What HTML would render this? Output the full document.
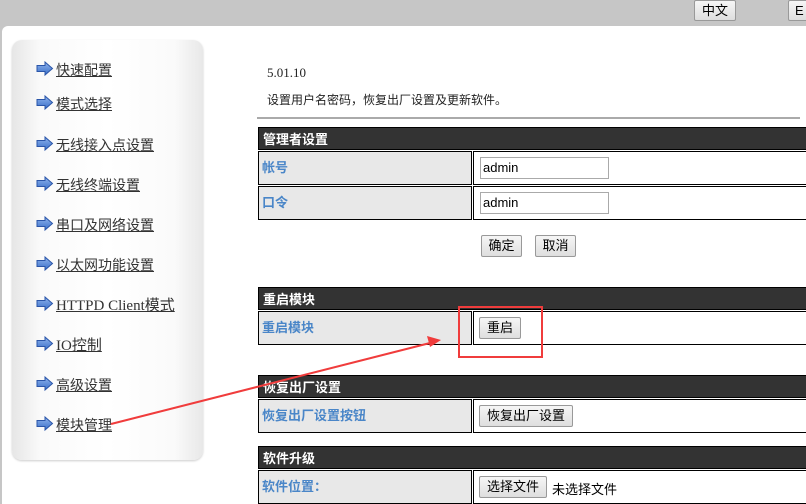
<!DOCTYPE html>
<html style="width:806px;height:504px;overflow:hidden"><head><meta charset="utf-8"><style>
*{margin:0;padding:0;box-sizing:border-box}
body{width:806px;height:504px;overflow:hidden;background:#c6c6c6;font-family:"Liberation Sans","Noto Sans CJK SC",sans-serif;position:relative}
.abs{position:absolute}
.panel{left:2px;top:26px;width:804px;height:478px;background:#fff;border-top-left-radius:6px}
.side{left:12px;top:40px;width:191px;height:420px;border-radius:10px;background:linear-gradient(90deg,#e6e6e6 0%,#fafafa 15%,#fff 50%,#fafafa 85%,#e8e8e8 100%);box-shadow:0 1px 2px #ccc}
.nav{position:absolute;left:36px;font-size:14px;color:#333;text-decoration:underline;line-height:16px;white-space:nowrap}
.nav svg{position:absolute;left:0;top:-1px}
.nav span{margin-left:20px}
.hdr{left:258px;width:560px;height:23px;background:#333;color:#fff;font-weight:bold;font-size:13px;line-height:23px;padding-left:4px;border:1px solid #000}
.lab{left:258px;width:214px;height:34px;background:#e8e8e8;border:1px solid #000;color:#4a86c8;font-weight:bold;font-size:13px;line-height:32px;padding-left:3px}
.val{left:473px;width:340px;height:34px;border:1px solid #000;background:#fff}
.inp{position:absolute;left:6px;top:5px;width:129px;height:22px;border:1px solid #aaa;font-size:13px;line-height:20px;padding-left:2px;color:#000}
.btn{position:absolute;height:22px;border:1px solid #999;border-radius:2px;background:linear-gradient(#f6f6f6,#dedede);font-size:13px;line-height:20px;text-align:center;color:#000}
</style></head><body>
<div class="abs panel"></div>
<div class="btn" style="left:694px;top:0;width:42px;height:21px;line-height:19px">中文</div>
<div class="btn" style="left:788px;top:0;width:30px;height:21px;line-height:19px;text-align:left;padding-left:6px">E</div>
<div class="abs side"></div>
<svg width="0" height="0" style="position:absolute"><defs><linearGradient id="g" x1="0" y1="0" x2="0" y2="1"><stop offset="0" stop-color="#8fb4ee"/><stop offset="1" stop-color="#3a6fc8"/></linearGradient></defs></svg>
<div class="nav" style="top:62px"><svg width="18" height="16"><path d="M1 4.5h8V1l7.5 6.5L9 14v-3.5H1z" fill="url(#g)" stroke="#2a55a8"/></svg><span>快速配置</span></div>
<div class="nav" style="top:96px"><svg width="18" height="16"><path d="M1 4.5h8V1l7.5 6.5L9 14v-3.5H1z" fill="url(#g)" stroke="#2a55a8"/></svg><span>模式选择</span></div>
<div class="nav" style="top:137px"><svg width="18" height="16"><path d="M1 4.5h8V1l7.5 6.5L9 14v-3.5H1z" fill="url(#g)" stroke="#2a55a8"/></svg><span>无线接入点设置</span></div>
<div class="nav" style="top:177px"><svg width="18" height="16"><path d="M1 4.5h8V1l7.5 6.5L9 14v-3.5H1z" fill="url(#g)" stroke="#2a55a8"/></svg><span>无线终端设置</span></div>
<div class="nav" style="top:217px"><svg width="18" height="16"><path d="M1 4.5h8V1l7.5 6.5L9 14v-3.5H1z" fill="url(#g)" stroke="#2a55a8"/></svg><span>串口及网络设置</span></div>
<div class="nav" style="top:257px"><svg width="18" height="16"><path d="M1 4.5h8V1l7.5 6.5L9 14v-3.5H1z" fill="url(#g)" stroke="#2a55a8"/></svg><span>以太网功能设置</span></div>
<div class="nav" style="top:297px"><svg width="18" height="16"><path d="M1 4.5h8V1l7.5 6.5L9 14v-3.5H1z" fill="url(#g)" stroke="#2a55a8"/></svg><span style="font-family:'Liberation Serif','Noto Sans CJK SC',serif;font-size:15px">HTTPD Client模式</span></div>
<div class="nav" style="top:337px"><svg width="18" height="16"><path d="M1 4.5h8V1l7.5 6.5L9 14v-3.5H1z" fill="url(#g)" stroke="#2a55a8"/></svg><span style="font-family:'Liberation Serif','Noto Sans CJK SC',serif;font-size:15px">IO控制</span></div>
<div class="nav" style="top:377px"><svg width="18" height="16"><path d="M1 4.5h8V1l7.5 6.5L9 14v-3.5H1z" fill="url(#g)" stroke="#2a55a8"/></svg><span>高级设置</span></div>
<div class="nav" style="top:417px"><svg width="18" height="16"><path d="M1 4.5h8V1l7.5 6.5L9 14v-3.5H1z" fill="url(#g)" stroke="#2a55a8"/></svg><span>模块管理</span></div>

<div class="abs" style="left:267px;top:65px;font-size:13px;font-family:'Liberation Serif',serif;color:#222">5.01.10</div>
<div class="abs" style="left:267px;top:91px;font-size:12px;color:#222">设置用户名密码，恢复出厂设置及更新软件。</div>
<div class="abs" style="left:257px;top:117px;width:543px;height:2px;background:#aaa"></div>

<div class="abs hdr" style="top:127px">管理者设置</div>
<div class="abs lab" style="top:151px">帐号</div>
<div class="abs val" style="top:151px"><div class="inp">admin</div></div>
<div class="abs lab" style="top:186px">口令</div>
<div class="abs val" style="top:186px"><div class="inp">admin</div></div>
<div class="btn" style="left:481px;top:235px;width:41px">确定</div>
<div class="btn" style="left:535px;top:235px;width:41px">取消</div>

<div class="abs hdr" style="top:287px">重启模块</div>
<div class="abs lab" style="top:311px">重启模块</div>
<div class="abs val" style="top:311px"><div class="btn" style="left:5px;top:5px;width:42px">重启</div></div>

<div class="abs hdr" style="top:375px">恢复出厂设置</div>
<div class="abs lab" style="top:399px">恢复出厂设置按钮</div>
<div class="abs val" style="top:399px"><div class="btn" style="left:5px;top:5px;width:94px">恢复出厂设置</div></div>

<div class="abs hdr" style="top:446px">软件升级</div>
<div class="abs lab" style="top:470px">软件位置：</div>
<div class="abs val" style="top:470px"><div class="btn" style="left:5px;top:5px;width:68px">选择文件</div><span style="position:absolute;left:78px;top:8px;font-size:13px">未选择文件</span></div>

<div class="abs" style="left:458px;top:306px;width:85px;height:52px;border:2px solid #f03c3c"></div>
<svg class="abs" style="left:0;top:0" width="806" height="504"><line x1="111" y1="424" x2="430" y2="343" stroke="#f03c3c" stroke-width="2"/><path d="M441 340L427 336L430 347Z" fill="#f03c3c"/></svg>
</body></html>
